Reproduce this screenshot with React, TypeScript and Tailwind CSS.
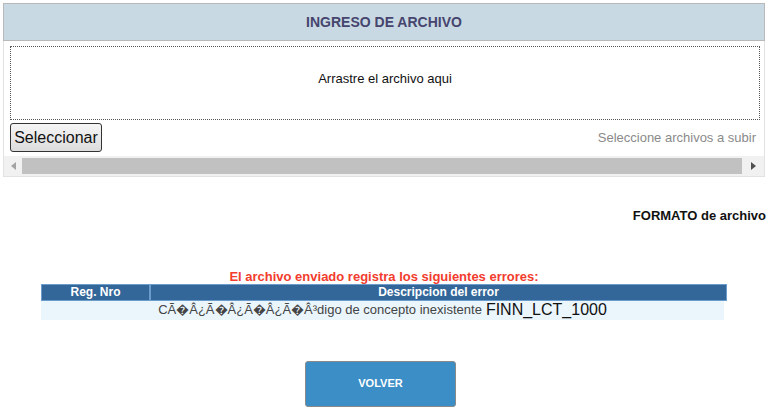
import React from 'react';

const errores = [
  { nro: '', desc: 'C\u00C3\uFFFD\u00C2\u00BF\u00C3\uFFFD\u00C2\u00BF\u00C3\uFFFD\u00C2\u00BF\u00C3\uFFFD\u00C2\u00B3digo de concepto inexistente', code: 'FINN_LCT_1000' },
];

export default function App() {
  return (
    <div className="w-[768px] h-[412px] overflow-hidden bg-white font-['Liberation_Sans',Arial,sans-serif]">
      {/* Ingreso de archivo */}
      <div className="mx-[3px] mt-[3px] w-[762px]">
        <div className="h-[38px] border border-[#b8b8b8] bg-[#c9d9e3] flex items-center justify-center">
          <span className="text-[14px] font-bold text-[#45456e]">INGRESO DE ARCHIVO</span>
        </div>
        <div className="border-x border-b border-[#e2e2e2] pt-[5px]">
          <div className="ml-[6px] mr-[4px] h-[74px] pt-[22px] border border-dotted border-[#555] flex justify-center text-[13px] text-[#111]">
            Arrastre el archivo aqui
          </div>
          <div className="ml-[6px] mr-[8px] mt-[3px] flex items-center justify-between">
            <button className="h-[29px] w-[92px] rounded-[3px] border border-[#333] bg-gradient-to-b from-[#f6f6f6] to-[#dcdcdc] text-[16px] text-[#111]">
              Seleccionar
            </button>
            <span className="text-[13px] text-[#8a8a8a]">Seleccione archivos a subir</span>
          </div>
          <div className="mt-[4px] h-[20px] bg-[#f1f1f1] flex items-center">
            <div className="w-[18px] flex justify-center">
              <svg width="5" height="8" viewBox="0 0 5 8"><path d="M5 0 L0 4 L5 8 Z" fill="#a3a3a3" /></svg>
            </div>
            <div className="flex-1 h-[16px] bg-[#c1c1c1]" />
            <div className="w-[22px] flex justify-center">
              <svg width="5" height="8" viewBox="0 0 5 8"><path d="M0 0 L5 4 L0 8 Z" fill="#505050" /></svg>
            </div>
          </div>
        </div>
      </div>

      {/* Formato */}
      <div className="mt-[29px] pr-[2px] flex justify-end">
        <span className="text-[13px] font-bold text-[#111]">FORMATO de archivo</span>
      </div>

      {/* Errores */}
      <div className="mt-[43px] flex flex-col items-center">
        <div className="text-[13px] font-bold text-[#f23c2e] leading-[15px]">El archivo enviado registra los siguientes errores:</div>
        <div className="w-[686px]">
          <div className="h-[17px] flex bg-[#336699] border border-[#6b9ccc] text-white text-[12px] font-bold leading-[15px]">
            <div className="w-[109px] border-r-2 border-[#6b9ccc] text-center">Reg. Nro</div>
            <div className="flex-1 text-center">Descripcion del error</div>
          </div>
          {errores.map((e, i) => (
            <div key={i} className="mr-[3px] h-[19px] bg-[#eaf5fc] flex items-center justify-center">
              <span className="text-[13px] text-[#444]">{e.desc}</span>
              <span className="ml-[4px] text-[16px] text-[#111] leading-[18px]">{e.code}</span>
            </div>
          ))}
        </div>
      </div>

      {/* Volver */}
      <div className="mt-[41px] pl-[305px]">
        <button className="w-[151px] h-[46px] rounded-[3px] border border-[#8a8a8a] bg-[#3b8ec6] text-white text-[11px] font-bold">
          VOLVER
        </button>
      </div>
    </div>
  );
}
